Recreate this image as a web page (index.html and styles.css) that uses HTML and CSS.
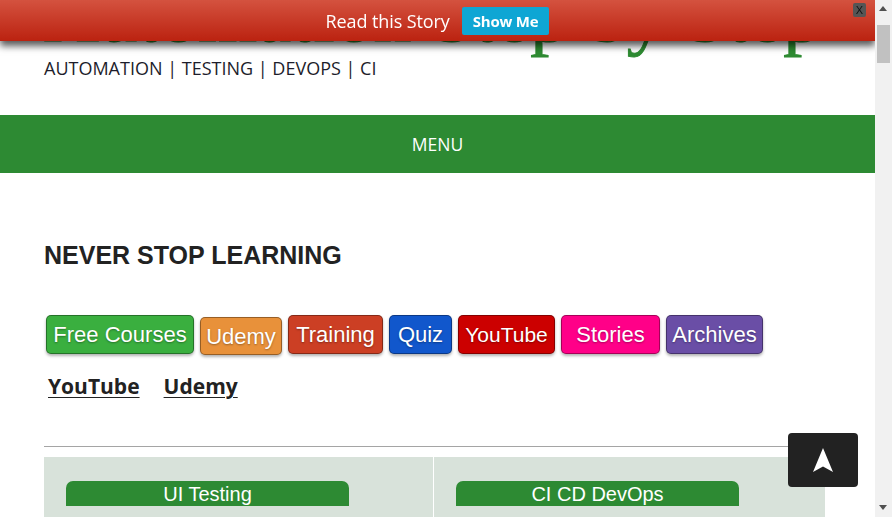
FILE: index.html
```html
<!DOCTYPE html>
<html lang="en">
<head>
<meta charset="utf-8">
<title>Automation Step by Step</title>
<link rel="stylesheet" href="styles.css">
</head>
<body>
<div class="page">
  <header class="site-header">
    <div class="site-title">Automation Step by Step</div>
    <div class="tagline">AUTOMATION | TESTING | DEVOPS | CI</div>
  </header>
  <nav class="menu-bar">MENU</nav>
  <main class="content">
    <h2 class="section-title">NEVER STOP LEARNING</h2>
    <div class="btn-row">
      <a class="pill pill-free">Free Courses</a>
      <a class="pill pill-udemy">Udemy</a>
      <a class="pill pill-training">Training</a>
      <a class="pill pill-quiz">Quiz</a>
      <a class="pill pill-youtube">YouTube</a>
      <a class="pill pill-stories">Stories</a>
      <a class="pill pill-archives">Archives</a>
    </div>
    <div class="text-links">
      <a class="text-link">YouTube</a>
      <a class="text-link">Udemy</a>
    </div>
    <hr class="divider">
    <div class="course-grid">
      <div class="course-col"><div class="course-tab">UI Testing</div></div>
      <div class="course-col"><div class="course-tab">CI CD DevOps</div></div>
    </div>
  </main>
</div>

<div class="story-bar">
  <span class="story-text">Read this Story</span>
  <a class="story-btn">Show Me</a>
  <span class="story-close">X</span>
</div>

<a class="to-top" aria-label="Back to top">
  <svg width="22" height="24" viewBox="0 0 22 24"><path d="M11 0 L21 24 L11 18.5 L1 24 Z" fill="#fff"/></svg>
</a>

<div class="fake-scrollbar">
  <span class="sb-up"></span>
  <span class="sb-thumb"></span>
  <span class="sb-down"></span>
</div>
</body>
</html>
```
FILE: styles.css
```css
html, body {
  margin: 0;
  padding: 0;
  overflow: hidden;
  background: #fff;
}
body {
  font-family: "Open Sans", "Liberation Sans", sans-serif;
  color: #222;
}
.page {
  width: 875px;
}
.site-header {
  padding-left: 44px;
}
.site-title {
  font-family: "Liberation Serif", serif;
  font-size: 76px;
  line-height: 64px;
  height: 64px;
  margin-top: -17px;
  color: #2e8b32;
  white-space: nowrap;
  letter-spacing: 0.5px;
  -webkit-text-stroke: 1px #2e8b32;
}
.tagline {
  margin-top: 9px;
  font-size: 18px;
  line-height: 24px;
  color: #1d1d2b;
}
.menu-bar {
  margin-top: 35px;
  height: 58px;
  line-height: 58px;
  background: #2d8a33;
  color: #fff;
  text-align: center;
  font-size: 17.5px;
}
.content {
  padding-left: 44px;
}
.section-title {
  margin: 68px 0 0;
  font-family: "Liberation Sans", Arial, sans-serif;
  font-weight: bold;
  font-size: 25px;
  line-height: 28px;
  color: #222;
}
.btn-row {
  margin-top: 46px;
  display: flex;
  align-items: flex-start;
  gap: 6px;
  padding-left: 2px;
}
.pill {
  box-sizing: border-box;
  height: 39px;
  line-height: 37px;
  border: 1px solid rgba(0,0,0,0.35);
  border-radius: 5px;
  color: #fff;
  text-align: center;
  font-family: "Liberation Sans", Arial, sans-serif;
  font-size: 22px;
  text-shadow: 0 1px 2px rgba(0,0,0,0.35);
  box-shadow: 0 2px 3px rgba(0,0,0,0.3);
}
.pill-free { width: 148px; background: #3aaf3f; }
.pill-udemy { width: 82px; background: #e8913a; margin-top: 2px; height: 38px; }
.pill-training { width: 95px; background: #cc3f24; }
.pill-quiz { width: 63px; background: #1157cc; }
.pill-youtube { width: 97px; background: #cc0000; font-size: 21px; }
.pill-stories { width: 99px; background: #ff0088; }
.pill-archives { width: 97px; background: #6a4ea6; }
.text-links {
  margin-top: 17px;
  display: flex;
  gap: 24px;
  padding-left: 4px;
}
.text-link {
  font-weight: bold;
  font-size: 21px;
  line-height: 29px;
  color: #222;
  text-decoration: underline;
  text-underline-offset: 3px;
  text-decoration-thickness: 1px;
}
.divider {
  margin: 45px 0 0;
  width: 787px;
  border: 0;
  border-top: 1px solid #a5a5a5;
  height: 0;
}
.course-grid {
  margin-top: 10px;
  width: 781px;
  display: grid;
  grid-template-columns: 389px 391px;
  gap: 1px;
  background: #fff;
}
.course-col {
  background: #d8e2da;
  padding: 24px 0 20px 22px;
  height: 80px;
}
.course-tab {
  width: 283px;
  height: 25px;
  line-height: 27px;
  background: #2d8a33;
  color: #fff;
  border-radius: 7px 7px 0 0;
  text-align: center;
  font-family: "Liberation Sans", Arial, sans-serif;
  font-size: 20px;
}
.story-bar {
  position: fixed;
  top: 0;
  left: 0;
  right: 17px;
  height: 41px;
  background: linear-gradient(#d4523f, #bb2210);
  box-shadow: 0 5px 7px rgba(0,0,0,0.65);
  display: flex;
  align-items: center;
  justify-content: center;
  gap: 12px;
  z-index: 10;
}
.story-text {
  color: #fff;
  font-size: 18px;
  letter-spacing: -0.1px;
}
.story-btn {
  background: #0ea6d4;
  color: #fff;
  font-weight: bold;
  font-size: 15px;
  height: 28px;
  line-height: 28px;
  padding: 0 11px;
  border-radius: 2px;
  letter-spacing: -0.2px;
}
.story-close {
  position: absolute;
  top: 3px;
  right: 9px;
  width: 13px;
  height: 14px;
  line-height: 14px;
  background: #555;
  color: #111;
  font-size: 11px;
  text-align: center;
  border-radius: 2px;
  font-family: "Liberation Sans", Arial, sans-serif;
}
.to-top {
  position: fixed;
  right: 34px;
  bottom: 30px;
  width: 70px;
  height: 54px;
  background: #222;
  border-radius: 4px;
  display: flex;
  align-items: center;
  justify-content: center;
  z-index: 9;
}
.fake-scrollbar {
  position: fixed;
  top: 0;
  right: 0;
  width: 17px;
  height: 100%;
  background: #f1f1f1;
  z-index: 20;
}
.sb-up {
  position: absolute;
  top: 6px;
  left: 4px;
  border-left: 4.5px solid transparent;
  border-right: 4.5px solid transparent;
  border-bottom: 5px solid #505050;
}
.sb-down {
  position: absolute;
  bottom: 7px;
  left: 4px;
  border-left: 4.5px solid transparent;
  border-right: 4.5px solid transparent;
  border-top: 5px solid #505050;
}
.sb-thumb {
  position: absolute;
  top: 25px;
  left: 2px;
  width: 13px;
  height: 38px;
  background: #c1c1c1;
}
```
